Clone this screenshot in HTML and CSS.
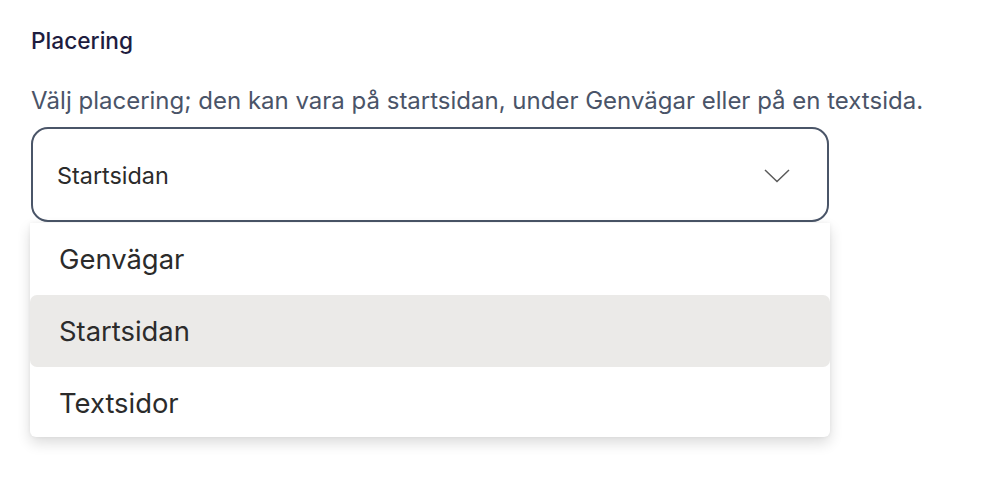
FILE: index.html
```html
<!DOCTYPE html>
<html lang="sv">
<head>
<meta charset="utf-8">
<title>Placering</title>
<link rel="stylesheet" href="styles.css">
</head>
<body>
<div class="field">
  <h2 class="label">Placering</h2>
  <p class="help">Välj placering; den kan vara på startsidan, under Genvägar eller på en textsida.</p>
  <div class="select-wrap">
    <div class="select">
      <span class="value">Startsidan</span>
      <svg class="chevron" width="26" height="14" viewBox="0 0 26 14" aria-hidden="true"><path d="M1 1 L13 12.5 L25 1" fill="none" stroke="#5a5a5a" stroke-width="1.5"/></svg>
    </div>
    <ul class="menu">
      <li class="option">Genvägar</li>
      <li class="option active">Startsidan</li>
      <li class="option last">Textsidor</li>
    </ul>
  </div>
</div>
</body>
</html>
```
FILE: styles.css
```css
* { box-sizing: border-box; }
html, body { margin: 0; background: #fff; }
body {
  font-family: Inter, "Noto Sans", sans-serif;
  width: 994px;
  height: 492px;
  overflow: hidden;
}
.field {
  padding: 28px 0 0 31px;
  width: 940px;
}
.label {
  margin: 0;
  font-size: 22.7px;
  line-height: 26px;
  font-weight: 500;
  color: #1e1d3f;
}
.help {
  margin: 33px 0 0;
  font-size: 24px;
  line-height: 28px;
  color: #4a5468;
  white-space: nowrap;
}
.select-wrap {
  margin-top: 12px;
  position: relative;
  width: 798px;
}
.select {
  height: 95px;
  border: 2px solid #4a5568;
  border-radius: 17px;
  display: flex;
  align-items: center;
  justify-content: space-between;
  padding: 2px 37px 0 24px;
}
.value {
  font-size: 23.4px;
  color: #2b2b2b;
}
.chevron { display: block; }
.menu {
  position: absolute;
  left: -1px;
  top: 96px;
  width: 800px;
  margin: 0;
  padding: 0;
  list-style: none;
  background: #fff;
  border-radius: 0 0 6px 6px;
  box-shadow: 0 6px 14px rgba(0,0,0,0.14), 0 0 4px rgba(0,0,0,0.05);
}
.option {
  height: 72px;
  display: flex;
  align-items: center;
  padding-left: 29px;
  font-size: 27.4px;
  color: #2b2b2b;
  border-radius: 7px;
}
.option.last { height: 70px; padding-top: 2px; }
.option.active { background: #ebeae8; }
```
